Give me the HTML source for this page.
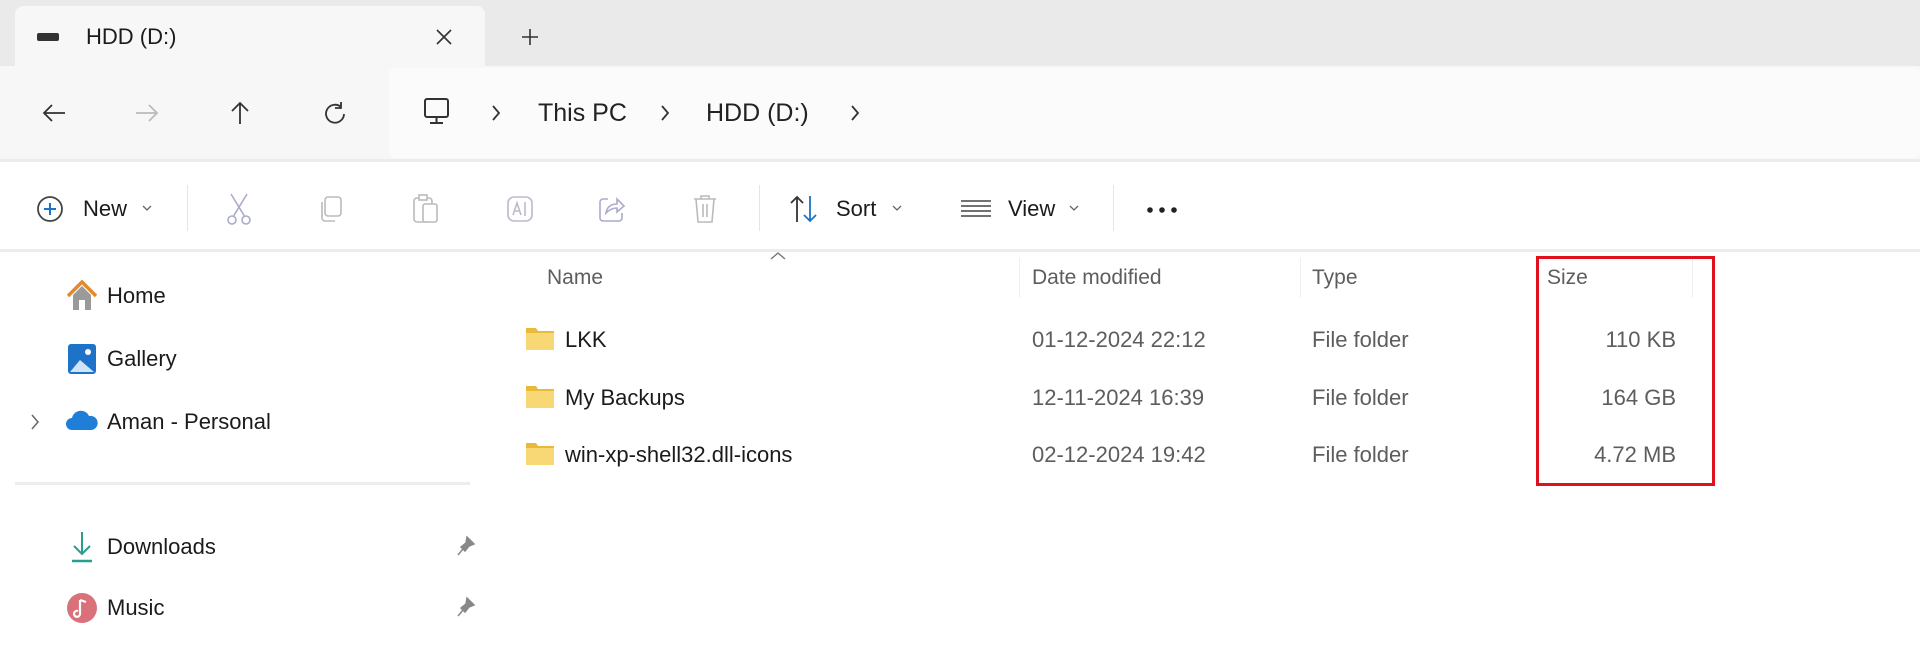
<!DOCTYPE html>
<html><head><meta charset="utf-8"><style>
*{margin:0;padding:0;box-sizing:border-box}
body{width:1920px;height:662px;overflow:hidden;background:#fff;font-family:"Liberation Sans",sans-serif;color:#1b1b1b;position:relative}
.a{position:absolute;white-space:nowrap}
.t{font-size:22px;line-height:26px}
.g{color:#5d5d5d}
svg{position:absolute;overflow:visible}
</style></head><body>
<div class="a" style="left:0;top:0;width:1920px;height:67px;background:#eaeaea"></div>
<div class="a" style="left:15px;top:6px;width:470px;height:62px;background:#f7f7f7;border-radius:8px 8px 0 0"></div>
<div class="a" style="left:0;top:66px;width:1920px;height:94px;background:#f7f7f7"></div>
<div class="a" style="left:389px;top:68px;width:1531px;height:90px;background:#fbfbfb;border-radius:6px"></div>
<div class="a" style="left:0;top:159px;width:1920px;height:3px;background:#ececec"></div>
<div class="a" style="left:0;top:249px;width:1920px;height:3px;background:#ececec"></div>

<div class="a" style="left:37px;top:33px;width:22px;height:8px;background:#333;border-radius:2px"></div>
<div class="a t" style="left:86px;top:24px;font-size:22px">HDD (D:)</div>
<svg style="left:436px;top:29px" width="16" height="16"><path d="M1 1L15 15M15 1L1 15" stroke="#333" stroke-width="1.6"/></svg>
<svg style="left:522px;top:29px" width="16" height="16"><path d="M8 0V16M0 8H16" stroke="#333" stroke-width="1.6"/></svg>

<svg style="left:42px;top:103px" width="24" height="20"><path d="M23 10H2M10 2L2 10L10 18" stroke="#333" stroke-width="1.8" fill="none"/></svg>
<svg style="left:135px;top:103px" width="24" height="20"><path d="M1 10H22M14 2L22 10L14 18" stroke="#bbb" stroke-width="1.8" fill="none"/></svg>
<svg style="left:230px;top:101px" width="20" height="24"><path d="M10 23V2M2 10L10 2L18 10" stroke="#333" stroke-width="1.8" fill="none"/></svg>
<svg style="left:324px;top:102px" width="22" height="22"><path d="M17 5A9 9 0 1 0 20 12M17 0V6H11" stroke="#333" stroke-width="1.8" fill="none"/></svg>
<svg style="left:423px;top:97px" width="28" height="30"><rect x="2" y="2" width="23" height="18" rx="2" stroke="#333" stroke-width="2" fill="none"/><path d="M13.5 20V25M7 26H20" stroke="#333" stroke-width="2"/></svg>
<svg style="left:491px;top:105px" width="10" height="16"><path d="M2 1L8 8L2 15" stroke="#333" stroke-width="1.8" fill="none"/></svg>
<div class="a" style="left:538px;top:98px;font-size:25px;line-height:30px;color:#222">This PC</div>
<svg style="left:660px;top:105px" width="10" height="16"><path d="M2 1L8 8L2 15" stroke="#333" stroke-width="1.8" fill="none"/></svg>
<div class="a" style="left:706px;top:98px;font-size:25px;line-height:30px;color:#222">HDD (D:)</div>
<svg style="left:850px;top:105px" width="10" height="16"><path d="M2 1L8 8L2 15" stroke="#333" stroke-width="1.8" fill="none"/></svg>

<svg style="left:36px;top:195px" width="28" height="28"><circle cx="14" cy="14" r="12" stroke="#444" stroke-width="1.8" fill="none"/><path d="M14 8V20M8 14H20" stroke="#1a73c8" stroke-width="2"/></svg>
<div class="a t" style="left:83px;top:196px">New</div>
<svg style="left:142px;top:205px" width="10" height="6"><path d="M1 1L5 5L9 1" stroke="#666" stroke-width="1.3" fill="none"/></svg>
<div class="a" style="left:187px;top:185px;width:1px;height:46px;background:#e5e5e5"></div>
<svg style="left:226px;top:193px" width="26" height="32"><path d="M5 1L19 24M21 1L7 24" stroke="#aac" stroke-width="1.6"/><circle cx="6" cy="27" r="4" stroke="#aac" fill="none" stroke-width="1.6"/><circle cx="20" cy="27" r="4" stroke="#aac" fill="none" stroke-width="1.6"/></svg>
<svg style="left:318px;top:195px" width="26" height="28"><rect x="7" y="2" width="16" height="19" rx="3" stroke="#bbb" fill="none" stroke-width="1.6"/><path d="M4 7V23a3 3 0 0 0 3 3H17" stroke="#bbb" fill="none" stroke-width="1.6"/></svg>
<svg style="left:412px;top:194px" width="28" height="30"><rect x="2" y="4" width="18" height="24" rx="3" stroke="#bbb" fill="none" stroke-width="1.6"/><rect x="11" y="10" width="14" height="18" rx="2" stroke="#bbb" fill="#fff" stroke-width="1.6"/><rect x="7" y="1" width="8" height="5" stroke="#bbb" fill="#fff" stroke-width="1.6"/></svg>
<svg style="left:505px;top:194px" width="30" height="30"><rect x="3" y="3" width="24" height="24" rx="6" stroke="#bbc" fill="none" stroke-width="1.6"/><path d="M8 21L12 9L16 21M9.5 17H14.5M20 8V22" stroke="#bbc" fill="none" stroke-width="1.6"/></svg>
<svg style="left:598px;top:195px" width="28" height="28"><path d="M10 4H5a3 3 0 0 0-3 3V23a3 3 0 0 0 3 3H21a3 3 0 0 0 3-3V18M8 18C9 12 13 9 19 9V4L26 11L19 17V13C14 13 11 15 8 18Z" stroke="#aac" fill="none" stroke-width="1.6"/></svg>
<svg style="left:692px;top:193px" width="26" height="32"><path d="M2 6H24M9 6V3H17V6M4 6L6 29H20L22 6M11 11V24M15 11V24" stroke="#bbb" fill="none" stroke-width="1.6"/></svg>
<div class="a" style="left:759px;top:185px;width:1px;height:46px;background:#e5e5e5"></div>
<svg style="left:789px;top:195px" width="30" height="28"><path d="M8 27V2M2 8L8 2L14 8" stroke="#333" stroke-width="1.8" fill="none"/><path d="M21 1V26M15 20L21 26L27 20" stroke="#1a73c8" stroke-width="1.8" fill="none"/></svg>
<div class="a t" style="left:836px;top:196px">Sort</div>
<svg style="left:892px;top:205px" width="10" height="6"><path d="M1 1L5 5L9 1" stroke="#666" stroke-width="1.3" fill="none"/></svg>
<svg style="left:960px;top:199px" width="32" height="20"><path d="M1 2H31M1 7H31M1 12H31M1 17H31" stroke="#444" stroke-width="1.6"/></svg>
<div class="a t" style="left:1008px;top:196px">View</div>
<svg style="left:1069px;top:205px" width="10" height="6"><path d="M1 1L5 5L9 1" stroke="#666" stroke-width="1.3" fill="none"/></svg>
<div class="a" style="left:1113px;top:185px;width:1px;height:46px;background:#e5e5e5"></div>
<svg style="left:1146px;top:206px" width="34" height="8"><circle cx="4" cy="4" r="2.8" fill="#222"/><circle cx="16" cy="4" r="2.8" fill="#222"/><circle cx="28" cy="4" r="2.8" fill="#222"/></svg>

<svg style="left:65px;top:280px" width="34" height="32"><path d="M3 16L17 2L31 16" stroke="#e38a2c" stroke-width="3.5" fill="none"/><path d="M8 15V30H26V15L17 6Z" fill="#9a9a9a"/><rect x="14" y="20" width="6" height="10" fill="#fff"/></svg>
<div class="a t" style="left:107px;top:283px">Home</div>
<svg style="left:66px;top:342px" width="32" height="34"><rect x="2" y="2" width="28" height="30" rx="3" fill="#1e73c8"/><path d="M4 30L14 18L28 30Z" fill="#cfe4f7"/><circle cx="22" cy="10" r="3" fill="#fff"/></svg>
<div class="a t" style="left:107px;top:346px">Gallery</div>
<svg style="left:30px;top:414px" width="10" height="16"><path d="M2 1L8 8L2 15" stroke="#666" stroke-width="1.5" fill="none"/></svg>
<svg style="left:66px;top:408px" width="32" height="24"><path d="M6 22a6 6 0 0 1 0-12a9 9 0 0 1 17-2a7 7 0 0 1 3 14Z" fill="#1f7fd8"/></svg>
<div class="a t" style="left:107px;top:409px">Aman - Personal</div>
<div class="a" style="left:15px;top:482px;width:455px;height:3px;background:#ededed"></div>
<svg style="left:70px;top:530px" width="24" height="34"><path d="M12 2V24M4 16L12 24L20 16" stroke="#2a9d8f" stroke-width="2" fill="none"/><path d="M2 31H22" stroke="#2a9d8f" stroke-width="2.5"/></svg>
<div class="a t" style="left:107px;top:534px">Downloads</div>
<svg style="left:457px;top:536px" width="18" height="20"><path d="M10 1L17 8L12 10L8 15L4 11L9 7Z M6 13L1 19" fill="#888" stroke="#888" stroke-width="1.5"/></svg>
<svg style="left:66px;top:591px" width="32" height="34"><circle cx="16" cy="17" r="15" fill="#d9707a"/><path d="M14 9V23a3 3 0 1 1-2-3M14 9L20 11" stroke="#fff" stroke-width="2.2" fill="none"/></svg>
<div class="a t" style="left:107px;top:595px">Music</div>
<svg style="left:457px;top:597px" width="18" height="20"><path d="M10 1L17 8L12 10L8 15L4 11L9 7Z M6 13L1 19" fill="#888" stroke="#888" stroke-width="1.5"/></svg>

<svg style="left:770px;top:252px" width="16" height="8"><path d="M1 7L8 1L15 7" stroke="#777" stroke-width="1.4" fill="none"/></svg>
<div class="a t g" style="left:547px;top:265px;font-size:21px">Name</div>
<div class="a" style="left:1019px;top:258px;width:1px;height:40px;background:#eee"></div>
<div class="a t g" style="left:1032px;top:265px;font-size:21px">Date modified</div>
<div class="a" style="left:1300px;top:258px;width:1px;height:40px;background:#eee"></div>
<div class="a t g" style="left:1312px;top:265px;font-size:21px">Type</div>
<div class="a" style="left:1692px;top:258px;width:1px;height:40px;background:#eee"></div>
<div class="a t g" style="left:1547px;top:265px;font-size:21px">Size</div>

<svg style="left:525px;top:326px" width="30" height="26"><path d="M1 2H11L13 5H29V24H1Z" fill="#e8b93a"/><rect x="1" y="7" width="28" height="17" fill="#f8d775"/></svg>
<div class="a t" style="left:565px;top:327px">LKK</div>
<div class="a t g" style="left:1032px;top:327px">01-12-2024 22:12</div>
<div class="a t g" style="left:1312px;top:327px;width:100px;overflow:hidden">File folder</div>
<div class="a t g" style="left:1560px;top:327px;width:116px;text-align:right">110 KB</div>

<svg style="left:525px;top:384px" width="30" height="26"><path d="M1 2H11L13 5H29V24H1Z" fill="#e8b93a"/><rect x="1" y="7" width="28" height="17" fill="#f8d775"/></svg>
<div class="a t" style="left:565px;top:385px">My Backups</div>
<div class="a t g" style="left:1032px;top:385px">12-11-2024 16:39</div>
<div class="a t g" style="left:1312px;top:385px;width:100px;overflow:hidden">File folder</div>
<div class="a t g" style="left:1560px;top:385px;width:116px;text-align:right">164 GB</div>

<svg style="left:525px;top:441px" width="30" height="26"><path d="M1 2H11L13 5H29V24H1Z" fill="#e8b93a"/><rect x="1" y="7" width="28" height="17" fill="#f8d775"/></svg>
<div class="a t" style="left:565px;top:442px">win-xp-shell32.dll-icons</div>
<div class="a t g" style="left:1032px;top:442px">02-12-2024 19:42</div>
<div class="a t g" style="left:1312px;top:442px;width:100px;overflow:hidden">File folder</div>
<div class="a t g" style="left:1560px;top:442px;width:116px;text-align:right">4.72 MB</div>

<div class="a" style="left:1536px;top:256px;width:179px;height:230px;border:3.5px solid #e0101e"></div>
</body></html>
